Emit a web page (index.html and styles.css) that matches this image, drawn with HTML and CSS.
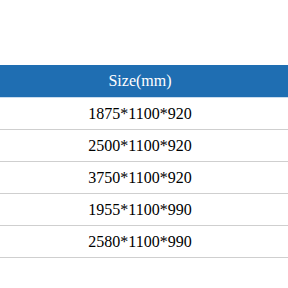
FILE: index.html
```html
<!DOCTYPE html>
<html>
<head>
<meta charset="utf-8">
<link rel="stylesheet" href="styles.css">
</head>
<body>
<table class="spec">
  <thead>
    <tr><th>Size(mm)</th></tr>
  </thead>
  <tbody>
    <tr><td>1875*1100*920</td></tr>
    <tr><td>2500*1100*920</td></tr>
    <tr><td>3750*1100*920</td></tr>
    <tr><td>1955*1100*990</td></tr>
    <tr><td>2580*1100*990</td></tr>
  </tbody>
</table>
</body>
</html>
```
FILE: styles.css
```css
html, body {
  margin: 0;
  padding: 0;
  background: #fff;
}
.spec {
  margin-top: 65px;
  width: 100%;
  border-collapse: collapse;
  font-family: "Liberation Serif", "Times New Roman", serif;
  font-size: 16px;
  color: #000;
}
.spec th {
  height: 32px;
  padding: 0 8px 0 0;
  background: #1f6eb2;
  color: #fff;
  font-weight: normal;
  text-align: center;
  border-bottom: 1px solid #c9dcee;
}
.spec td {
  height: 31px;
  padding: 0 8px 0 0;
  text-align: center;
  border-bottom: 1px solid #cfcfcf;
}
```
